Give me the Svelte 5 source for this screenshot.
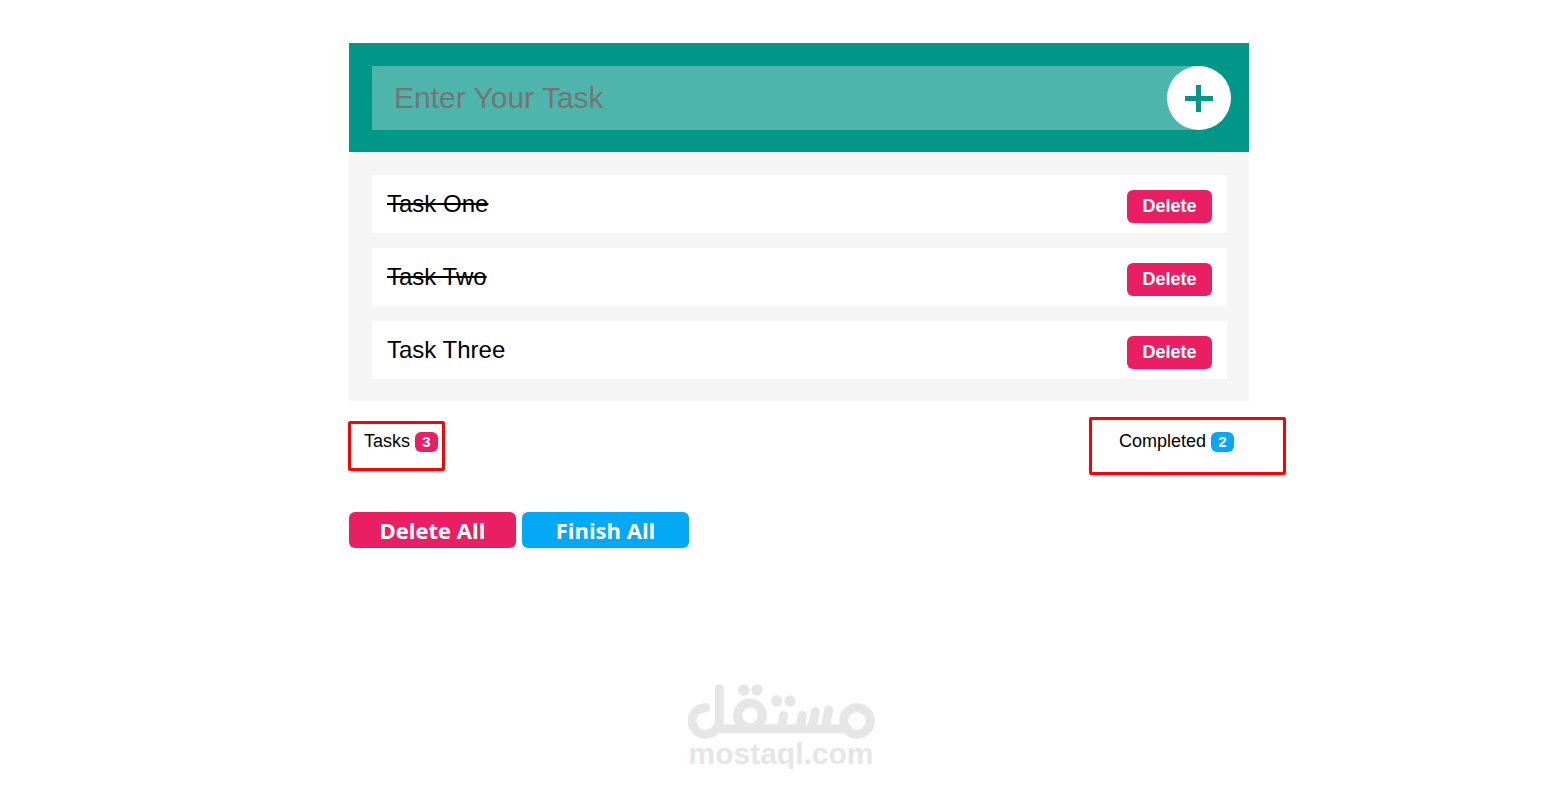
<script lang="ts">
	type Task = { id: number; title: string; done: boolean };

	let tasks = $state<Task[]>([
		{ id: 1, title: 'Task One', done: true },
		{ id: 2, title: 'Task Two', done: true },
		{ id: 3, title: 'Task Three', done: false }
	]);
	let title = $state('');
	let nextId = 4;

	const completed = $derived(tasks.filter((t) => t.done).length);

	function addTask(e: SubmitEvent) {
		e.preventDefault();
		if (!title.trim()) return;
		tasks.push({ id: nextId++, title: title.trim(), done: false });
		title = '';
	}

	function removeTask(id: number) {
		tasks = tasks.filter((t) => t.id !== id);
	}

	function finishAll() {
		for (const task of tasks) task.done = true;
	}
</script>

<main class="page">
	<div class="todo">
		<form class="add-task" onsubmit={addTask}>
			<input class="add-task__input" type="text" placeholder="Enter Your Task" aria-label="Enter Your Task" bind:value={title} />
			<button class="add-task__btn" type="submit" aria-label="Add task">
				<svg width="28" height="27" viewBox="0 0 28 27" fill="currentColor">
					<rect x="0" y="11" width="28" height="5" /><rect x="11" y="0" width="5" height="27" />
				</svg>
			</button>
		</form>

		<ul class="tasks">
			{#each tasks as task (task.id)}
				<li class="task">
					<button class="task__title" class:task__title--done={task.done} onclick={() => (task.done = !task.done)}>{task.title}</button>
					<button class="task__delete" onclick={() => removeTask(task.id)}>Delete</button>
				</li>
			{/each}
		</ul>

		<div class="stats">
			<div class="stat stat--tasks">
				Tasks <span class="badge">{tasks.length}</span>
			</div>
			<div class="stat stat--completed">
				Completed <span class="badge badge--blue">{completed}</span>
			</div>
		</div>

		<div class="actions">
			<button class="action" onclick={() => (tasks = [])}>Delete All</button>
			<button class="action action--blue" onclick={finishAll}>Finish All</button>
		</div>
	</div>

	<footer class="brand">
		<svg class="brand__logo" viewBox="51 42 561 165" fill="none" stroke="currentColor" stroke-width="27" stroke-linecap="round" aria-hidden="true">
			<path d="M104 113A40 40 0 1 0 136 176H530" />
			<path d="M145 56V172" />
			<circle cx="237" cy="136" r="37" />
			<circle cx="558" cy="153" r="40" />
			<path d="M338 136L333 170M394 136L388 170M433 125L424 170M473 120L464 170" />
			<g fill="currentColor" stroke="none">
				<circle cx="218" cy="60" r="17" /><circle cx="258" cy="60" r="17" />
				<circle cx="317" cy="93" r="17" /><circle cx="357" cy="93" r="17" />
			</g>
		</svg>
		<span class="brand__name">mostaql.com</span>
	</footer>
</main>

<style>
	:global(body) {
		background: #fff;
	}

	.page,
	.page * {
		box-sizing: border-box;
	}

	.page {
		padding-top: 43px;
		font-family: 'Liberation Sans', Arial, sans-serif;
		color: #000;
		overflow-x: hidden;
	}

	.page button {
		border: none;
		padding: 0;
		font-family: inherit;
		cursor: pointer;
	}

	.todo {
		width: calc(100% - 36px);
		max-width: 900px;
		margin: 0 auto;
		position: relative;
		left: 18px;
	}

	/* Add task */
	.add-task {
		position: relative;
		padding: 23px 22px 22px 23px;
		background: #009688;
	}

	.add-task__input {
		display: block;
		width: 100%;
		height: 64px;
		padding: 0 80px 0 22px;
		border: none;
		border-radius: 0 32px 32px 0;
		outline: none;
		background: rgba(255, 255, 255, 0.3);
		font-family: inherit;
		font-size: 30px;
	}

	.add-task__input::placeholder {
		color: #757575;
		opacity: 1;
	}

	.add-task__btn {
		position: absolute;
		top: 23px;
		right: 18px;
		width: 64px;
		height: 64px;
		display: flex;
		align-items: center;
		justify-content: center;
		border-radius: 50%;
		background: #fff;
		color: #009688;
	}

	/* Task list */
	.tasks {
		list-style: none;
		margin: 0;
		padding: 23px 22px 22px 23px;
		display: flex;
		flex-direction: column;
		gap: 15px;
		background: #f5f5f5;
	}

	.task {
		display: flex;
		justify-content: space-between;
		align-items: flex-start;
		padding: 15px 15px 10px;
		background: #fff;
	}

	.page .task__title {
		background: none;
		color: inherit;
		font-size: 24px;
		line-height: 28px;
	}

	.task__title--done {
		text-decoration: line-through;
	}

	.page .task__delete {
		width: 85px;
		height: 33px;
		border-radius: 6px;
		background: #e91e63;
		color: #fff;
		font-size: 18px;
		font-weight: 700;
	}

	/* Counters */
	.stats {
		display: flex;
		justify-content: space-between;
		align-items: center;
		margin: 16px -37px 0 -1px;
	}

	.stat {
		display: flex;
		gap: 5px;
		border: 3px solid #f00;
		border-radius: 2px;
		font-size: 18px;
		line-height: 20px;
	}

	.stat--tasks {
		padding: 7px 4px 16px 13px;
	}

	.stat--completed {
		padding: 11px 49px 20px 27px;
	}

	.badge {
		width: 23px;
		height: 20px;
		margin-top: 1px;
		border-radius: 6px;
		background: #e91e63;
		color: #fff;
		font-size: 15px;
		font-weight: 700;
		text-align: center;
	}

	.badge--blue {
		background: #03a9f4;
	}

	/* Bulk actions */
	.actions {
		display: flex;
		gap: 6px;
		margin-top: 37px;
	}

	.page .action {
		width: 167px;
		height: 36px;
		border-radius: 6px;
		background: #e91e63;
		color: #fff;
		font-family: 'Segoe UI', 'Open Sans', sans-serif;
		font-size: 22px;
		font-weight: 700;
		line-height: 36px;
	}

	.page .action--blue {
		background: #03a9f4;
	}

	/* Brand */
	.brand {
		display: flex;
		flex-direction: column;
		align-items: center;
		margin-top: 136px;
		color: #e6e6e6;
	}

	.brand__logo {
		width: 187px;
		height: 55px;
	}

	.brand__name {
		font-size: 30px;
		font-weight: 700;
		line-height: 30px;
	}
</style>
